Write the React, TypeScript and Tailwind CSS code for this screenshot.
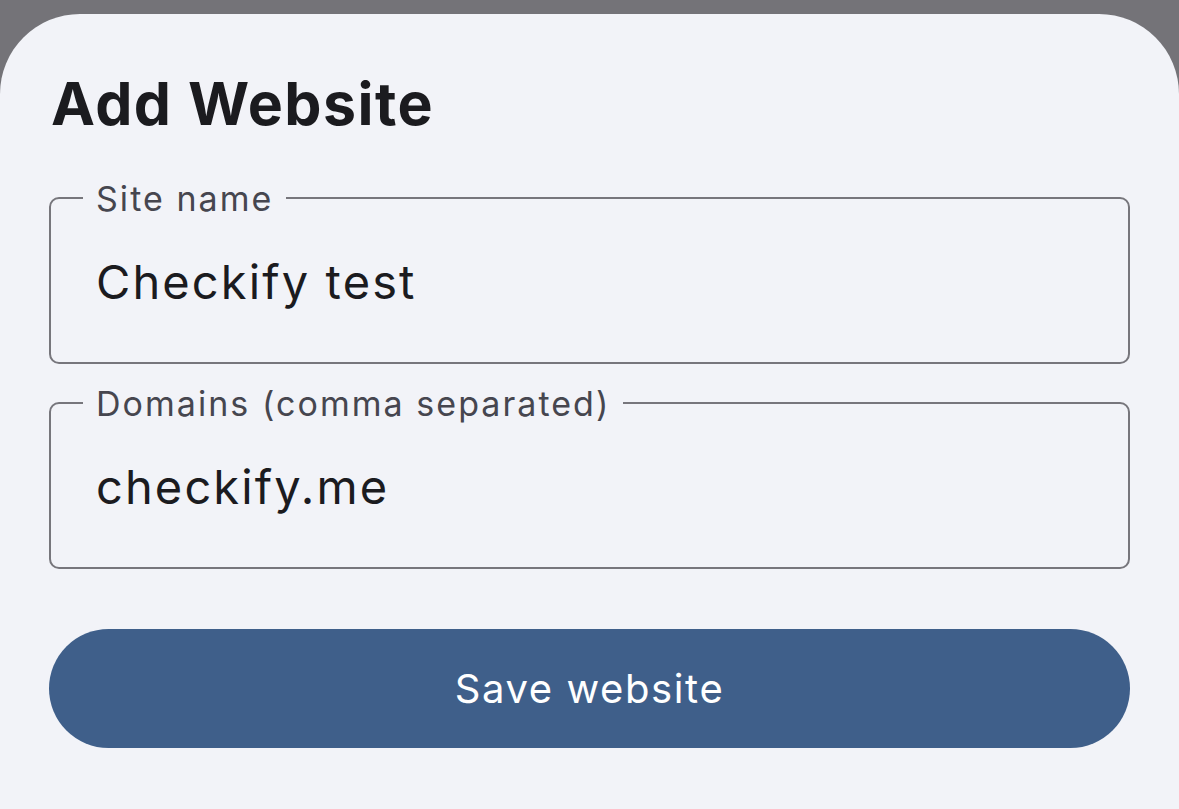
import React from "react";

interface OutlinedFieldProps {
  label: string;
  value: string;
}

function OutlinedField({ label, value }: OutlinedFieldProps) {
  return (
    <div className="relative h-[167px] rounded-[10px] border-2 border-[#77767c]">
      {/* Notched label */}
      <span className="absolute -top-[17px] left-[32px] bg-[#f2f3f8] px-[13px] text-[34px] leading-none tracking-[0.06em] text-[#46464f] whitespace-nowrap">
        {label}
      </span>
      <div className="pl-[45px] pt-[59px] text-[47px] leading-none tracking-[0.045em] text-[#1b1b1f] whitespace-nowrap">
        {value}
      </div>
    </div>
  );
}

export default function App() {
  return (
    <div
      className="h-[809px] w-full overflow-hidden bg-[#747378] pt-[14px]"
      style={{ fontFamily: "Inter, 'Noto Sans', sans-serif" }}
    >
      <div className="flex h-full flex-col rounded-t-[80px] bg-[#f2f3f8] px-[49px] pt-[60px]">
        {/* Header */}
        <h1 className="pl-[2px] text-[59px] font-bold leading-none tracking-[0.025em] text-[#1b1b1f]">
          Add Website
        </h1>

        {/* Fields */}
        <div className="mt-[64px] flex flex-col gap-[38px]">
          <OutlinedField label="Site name" value="Checkify test" />
          <OutlinedField label="Domains (comma separated)" value="checkify.me" />
        </div>

        {/* Action */}
        <button className="mt-[60px] h-[119px] w-full rounded-full bg-[#3f5f8a] text-[40px] font-normal leading-none tracking-[0.04em] text-white">
          Save website
        </button>
      </div>
    </div>
  );
}
